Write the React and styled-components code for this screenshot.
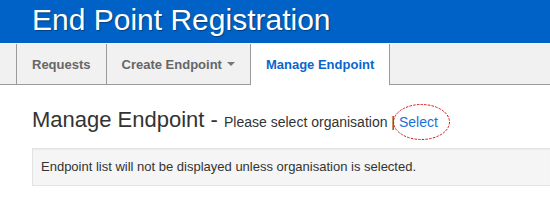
import React from "react";
import styled, { createGlobalStyle } from "styled-components";

const GlobalStyle = createGlobalStyle`
  body {
    margin: 0;
    background: #ffffff;
    font-family: "Liberation Sans", Arial, sans-serif;
    color: #333333;
  }
`;

const Header = styled.header`
  height: 43px;
  background-color: #0062c6;
  padding: 2px 0 0 32px;
  box-sizing: border-box;
`;

const Brand = styled.h1`
  margin: 0;
  font-size: 30px;
  font-weight: normal;
  line-height: 36px;
  color: #ffffff;
  text-shadow: 1px 1px 1px rgba(0, 0, 0, 0.35);
`;

const Tabs = styled.nav`
  display: flex;
  height: 40px;
  padding-left: 16px;
  background-color: #f1f1f1;
  border-top: 1px solid #f8f8f8;
  border-bottom: 1px solid #9a9a9a;
`;

const Tab = styled.a`
  display: flex;
  align-items: center;
  padding: 0 15px;
  border-left: 1px solid #9a9a9a;
  border-right: ${({ $active }) => ($active ? "1px solid #9a9a9a" : "none")};
  margin-bottom: ${({ $active }) => ($active ? "-1px" : "0")};
  background-color: ${({ $active }) => ($active ? "#ffffff" : "transparent")};
  color: ${({ $active }) => ($active ? "#0a66cc" : "#666666")};
  font-size: 13px;
  font-weight: bold;
  text-decoration: none;
`;

const Caret = styled.span`
  width: 0;
  height: 0;
  margin-left: 5px;
  border-top: 4px solid #777777;
  border-left: 4px solid transparent;
  border-right: 4px solid transparent;
`;

const Content = styled.main`
  padding: 23px 0 0 32px;
`;

const Title = styled.h3`
  margin: 0 0 14px;
  font-size: 22px;
  font-weight: normal;
  line-height: 24px;
  color: #333333;
`;

const Hint = styled.small`
  font-size: 14px;
  color: #333333;
`;

const SelectLink = styled.a`
  position: relative;
  display: inline-block;
  line-height: 16px;
  color: #1a6fd8;
  text-decoration: none;
`;

const Circle = styled.svg`
  position: absolute;
  left: -6px;
  top: -10px;
  width: 57px;
  height: 36px;
  overflow: visible;
  pointer-events: none;
`;

const Well = styled.div`
  padding: 9px 8px;
  background-color: #f5f5f5;
  border: 1px solid #e3e3e3;
  border-right: none;
  box-shadow: inset 0 1px 1px rgba(0, 0, 0, 0.05);
  font-size: 13px;
  line-height: 18px;
  color: #333333;
`;

const App = () => {
  return (
    <>
      <GlobalStyle />
      <Header>
        <Brand>End Point Registration</Brand>
      </Header>
      <Tabs>
        <Tab href="#">Requests</Tab>
        <Tab href="#">
          Create Endpoint
          <Caret />
        </Tab>
        <Tab href="#" $active>
          Manage Endpoint
        </Tab>
      </Tabs>
      <Content>
        <Title>
          Manage Endpoint -{" "}
          <Hint>
            Please select organisation |{" "}
            <SelectLink href="#">
              Select
              <Circle viewBox="0 0 57 36">
                <ellipse
                  cx="28.5"
                  cy="18"
                  rx="28"
                  ry="17.5"
                  fill="none"
                  stroke="#d81818"
                  strokeWidth="1"
                  strokeDasharray="2.5 1.2"
                />
              </Circle>
            </SelectLink>
          </Hint>
        </Title>
        <Well>Endpoint list will not be displayed unless organisation is selected.</Well>
      </Content>
    </>
  );
};

export default App;
